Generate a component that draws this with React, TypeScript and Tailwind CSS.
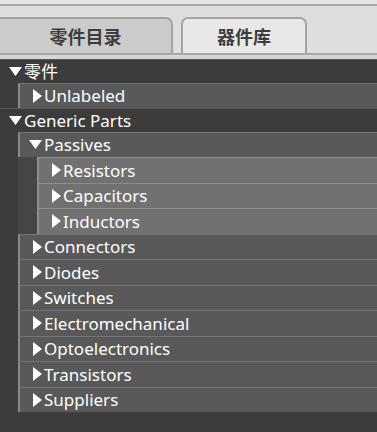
import React from "react";

type Node = { label: string; open?: boolean; children?: Node[] };

const tree: Node[] = [
  { label: "零件", open: true, children: [{ label: "Unlabeled" }] },
  {
    label: "Generic Parts",
    open: true,
    children: [
      {
        label: "Passives",
        open: true,
        children: [{ label: "Resistors" }, { label: "Capacitors" }, { label: "Inductors" }],
      },
      { label: "Connectors" },
      { label: "Diodes" },
      { label: "Switches" },
      { label: "Electromechanical" },
      { label: "Optoelectronics" },
      { label: "Transistors" },
      { label: "Suppliers" },
    ],
  },
];

function Arrow({ open }: { open: boolean }) {
  return (
    <div className="w-[15px] flex justify-end items-center shrink-0">
      {open ? (
        <svg width="13" height="9" viewBox="0 0 13 9">
          <polygon points="0,0 13,0 6.5,9" fill="#ffffff" />
        </svg>
      ) : (
        <svg width="9" height="14" viewBox="0 0 9 14">
          <polygon points="0,0 9,7 0,14" fill="#ffffff" />
        </svg>
      )}
    </div>
  );
}

function Row({ node, level }: { node: Node; level: number }) {
  const open = !!node.open;
  const rowCls =
    level === 0
      ? "h-[23.5px] bg-[#3c3c3c] border-t border-[#585858] pl-[7px]"
      : level === 1
      ? "h-[25.5px] bg-[#595959] border-t border-t-[#747474] border-l-2 border-l-[#8a8a8a] pl-[7px]"
      : "h-[25.5px] bg-[#717171] border-t border-t-[#8c8c8c] border-l-2 border-l-[#8e8e8e] pl-[7px]";
  return (
    <div>
      <div className={"flex items-center box-border " + rowCls}>
        <Arrow open={open} />
        <span className="ml-[2px] text-white text-[17px] leading-none whitespace-nowrap">{node.label}</span>
      </div>
      {open && node.children && (
        <div className={level === 0 ? "pl-[18px]" : "pl-[19px] bg-[#464646]"}>
          {node.children.map((c) => (
            <Row key={c.label} node={c} level={level + 1} />
          ))}
        </div>
      )}
    </div>
  );
}

export default function App() {
  return (
    <div
      className="w-[377px] h-[432px] overflow-hidden flex flex-col bg-[#dedede]"
      style={{ fontFamily: '"Noto Sans", "Noto Sans CJK SC", sans-serif' }}
    >
      <div className="h-[4px] bg-[#e4e4e4]" />
      <div className="h-[2px] bg-[#a6a6a6]" />
      <div className="h-[11px]" />
      <div className="flex h-[38px] border-b-2 border-[#a8a8a8]">
        <div className="w-[173px] h-full bg-[#cbcbcb] border-t-2 border-r-2 border-[#a3a3a3] rounded-tr-[7px] flex items-center justify-center">
          <span
            className="text-[18px] font-bold text-[#3e3e3e] leading-none"
            style={{ fontFamily: '"Noto Sans CJK SC", sans-serif' }}
          >
            零件目录
          </span>
        </div>
        <div className="w-[8px]" />
        <div className="w-[126px] h-full bg-[#e8e8e8] border-t-2 border-x-2 border-[#a3a3a3] rounded-t-[7px] flex items-center justify-center">
          <span
            className="text-[18px] font-bold text-[#3e3e3e] leading-none"
            style={{ fontFamily: '"Noto Sans CJK SC", sans-serif' }}
          >
            器件库
          </span>
        </div>
      </div>
      <div className="h-[4px] bg-[#d6d6d6]" />
      <div className="flex-1 bg-[#3c3c3c]">
        {tree.map((n) => (
          <Row key={n.label} node={n} level={0} />
        ))}
      </div>
    </div>
  );
}
